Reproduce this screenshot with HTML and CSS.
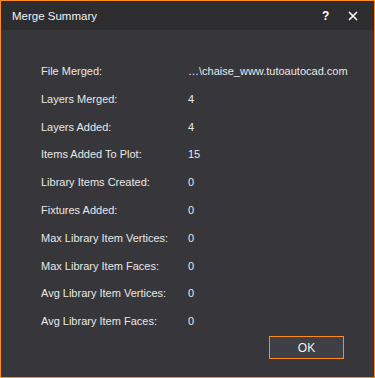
FILE: index.html
```html
<!DOCTYPE html>
<html>
<head>
<meta charset="utf-8">
<link rel="stylesheet" href="styles.css">
</head>
<body>
<div class="window">
  <div class="titlebar">
    <span class="title">Merge Summary</span>
    <span class="help">?</span>
    <span class="close">
      <svg width="10" height="10" viewBox="0 0 10 10"><path d="M1 1L9 9M9 1L1 9" stroke="#ffffff" stroke-width="1.6"/></svg>
    </span>
  </div>
  <div class="content">
    <div class="grid">
      <div class="label">File Merged:</div><div class="value">…\chaise_www.tutoautocad.com</div>
      <div class="label">Layers Merged:</div><div class="value">4</div>
      <div class="label">Layers Added:</div><div class="value">4</div>
      <div class="label">Items Added To Plot:</div><div class="value">15</div>
      <div class="label">Library Items Created:</div><div class="value">0</div>
      <div class="label">Fixtures Added:</div><div class="value">0</div>
      <div class="label">Max Library Item Vertices:</div><div class="value">0</div>
      <div class="label">Max Library Item Faces:</div><div class="value">0</div>
      <div class="label">Avg Library Item Vertices:</div><div class="value">0</div>
      <div class="label">Avg Library Item Faces:</div><div class="value">0</div>
    </div>
    <div class="footer">
      <button class="ok">OK</button>
    </div>
  </div>
</div>
</body>
</html>
```
FILE: styles.css
```css
html, body {
  margin: 0;
  padding: 0;
  background: #36363b;
}
.window {
  width: 375px;
  height: 378px;
  box-sizing: border-box;
  border: 1px solid #ff8c1a;
  background: #36363b;
  display: flex;
  flex-direction: column;
  font-family: "Liberation Sans", Arial, sans-serif;
  font-size: 11px;
  color: #e8e8e8;
}
.titlebar {
  height: 29px;
  background: #2d2d30;
  display: flex;
  align-items: center;
  padding-left: 11px;
  flex-shrink: 0;
}
.title {
  font-size: 11.5px;
  color: #f0f0f0;
  flex: 1;
}
.help {
  font-size: 12px;
  font-weight: bold;
  color: #ffffff;
  width: 10px;
  margin-right: 16px;
}
.close {
  width: 10px;
  height: 10px;
  display: flex;
  margin-right: 16px;
}
.content {
  flex: 1;
  display: flex;
  flex-direction: column;
  padding: 35px 30px 0 40px;
}
.grid {
  display: grid;
  grid-template-columns: 147px 1fr;
  grid-auto-rows: 13px;
  row-gap: 14.8px;
  align-items: start;
}
.label, .value {
  line-height: 13px;
  white-space: nowrap;
}
.footer {
  display: flex;
  justify-content: flex-end;
  margin-top: 8px;
}
.ok {
  width: 75px;
  height: 23px;
  background: #3f3f46;
  border: 1px solid #ff8c1a;
  color: #f0f0f0;
  font-family: "Liberation Sans", Arial, sans-serif;
  font-size: 12px;
  padding: 0;
}
```
